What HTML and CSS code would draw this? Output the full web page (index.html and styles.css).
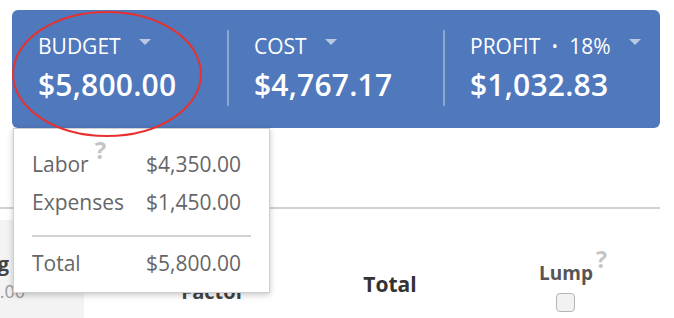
FILE: index.html
```html
<!DOCTYPE html>
<html lang="en">
<head>
    <meta charset="UTF-8">
    <meta name="viewport" content="width=device-width, initial-scale=1.0">
    <title>Job Budget</title>
    <link rel="stylesheet" href="styles.css">
</head>
<body>
    <div class="page">
        <!-- Summary bar -->
        <div class="summary">
            <div class="stat">
                <div class="stat-label">BUDGET<span class="caret"></span></div>
                <div class="stat-value">$5,800.00</div>
            </div>
            <div class="stat">
                <div class="stat-label">COST<span class="caret"></span></div>
                <div class="stat-value">$4,767.17</div>
            </div>
            <div class="stat">
                <div class="stat-label">PROFIT <span class="dot">•</span> 18%<span class="caret"></span></div>
                <div class="stat-value">$1,032.83</div>
            </div>
        </div>

        <!-- Table behind the popover -->
        <div class="sheet">
            <div class="head-row">
                <div class="cell side">
                    <div class="cut cut-title">Pricing</div>
                    <div class="cut cut-sub">1.00</div>
                </div>
                <div class="cell head factor">Markup<br>Factor</div>
                <div class="cell head total">Total</div>
                <div class="cell head lump">
                    <div>Lump<span class="hint">?</span></div>
                    <span class="check"></span>
                </div>
            </div>
        </div>

        <!-- Budget breakdown popover -->
        <div class="popover">
            <div class="pop-row">
                <span>Labor<span class="hint">?</span></span>
                <span class="amount">$4,350.00</span>
            </div>
            <div class="pop-row">
                <span>Expenses</span>
                <span class="amount">$1,450.00</span>
            </div>
            <div class="pop-rule"></div>
            <div class="pop-row">
                <span>Total</span>
                <span class="amount">$5,800.00</span>
            </div>
        </div>

        <!-- annotation -->
        <svg class="marker" width="194" height="132" viewBox="0 0 194 132">
            <ellipse cx="96" cy="65" rx="94" ry="62" fill="none" stroke="#e8312f" stroke-width="2"/>
        </svg>
    </div>
</body>
</html>
```

FILE: styles.css
```css
body {
    margin: 0;
    padding: 0;
    font-family: "Open Sans", "DejaVu Sans", sans-serif;
    background: #fff;
    overflow: hidden;
}

.page {
    position: relative;
    width: 674px;
    height: 318px;
    padding-top: 10px;
    box-sizing: border-box;
}

.summary {
    margin-left: 12px;
    width: 648px;
    height: 118px;
    background-color: #5078bc;
    border-radius: 6px;
    display: grid;
    grid-template-columns: 215px 216px 217px;
    color: #fff;
}

.stat {
    margin: 20px 0 22px;
    padding: 2px 0 0 26px;
}

.stat + .stat {
    border-left: 2px solid rgba(255, 255, 255, 0.35);
    padding-left: 25px;
}

.stat-label {
    font-size: 21px;
    line-height: 28px;
    display: flex;
    align-items: flex-start;
    white-space: pre;
}

.dot {
    font-size: 16px;
    padding: 0 6px;
}

.caret {
    margin: 7px 0 0 18px;
    width: 0;
    height: 0;
    border-left: 6px solid transparent;
    border-right: 6px solid transparent;
    border-top: 6px solid rgba(255, 255, 255, 0.6);
}

.stat-value {
    margin-top: 7px;
    font-size: 30px;
    line-height: 36px;
    font-weight: 600;
    letter-spacing: 0.2px;
}

.sheet {
    margin-top: 79px;
    width: 660px;
    border-top: 2px solid #d0d0d0;
}

.head-row {
    display: grid;
    grid-template-columns: 84px 258px 96px 254px;
    margin-top: 11px;
    height: 98px;
}

.cell {
    box-sizing: border-box;
}

.side {
    background: #f3f3f3;
    padding-top: 30px;
}

.cut {
    direction: rtl;
    overflow: hidden;
    white-space: nowrap;
}

.cut-title {
    width: 9px;
    font-size: 20px;
    line-height: 27px;
    font-weight: 700;
    color: #444;
}

.cut-sub {
    width: 25px;
    margin-top: 3px;
    font-size: 18px;
    line-height: 22px;
    color: #999;
}

.head {
    text-align: center;
    font-weight: 700;
    color: #444;
}

.factor {
    padding-top: 31px;
    font-size: 20px;
    line-height: 27px;
}

.total {
    padding-top: 50px;
    font-size: 21px;
    line-height: 28px;
    color: #333;
}

.lump {
    padding-top: 39px;
    font-size: 19px;
    line-height: 25px;
    color: #555;
    display: flex;
    flex-direction: column;
    align-items: center;
}

.lump .hint {
    font-size: 23px;
    line-height: 0;
    vertical-align: 12px;
    margin-left: 3px;
    margin-right: -16px;
}

.hint {
    color: #c4c4c4;
    font-weight: 700;
}

.check {
    display: block;
    margin-top: 7px;
    width: 17px;
    height: 17px;
    border: 1px solid #b5b5b5;
    border-radius: 4px;
    background: #f2f2f2;
}

.popover {
    position: absolute;
    left: 13px;
    top: 128px;
    width: 257px;
    height: 165px;
    box-sizing: border-box;
    background: #fff;
    border: 1px solid #cfcfcf;
    box-shadow: 0 2px 6px rgba(0, 0, 0, 0.22);
    padding: 16px 18px 0 18px;
    color: #666;
    font-size: 21px;
}

.pop-row {
    display: flex;
    justify-content: space-between;
    line-height: 38px;
    padding-right: 10px;
}

.pop-row .hint {
    font-size: 24px;
    vertical-align: 13px;
    line-height: 0;
    margin-left: 6px;
}

.pop-rule {
    margin: 14px 0 7px;
    border-top: 2px solid #d2d2d2;
}

.marker {
    position: absolute;
    left: 11px;
    top: 9px;
}
```
